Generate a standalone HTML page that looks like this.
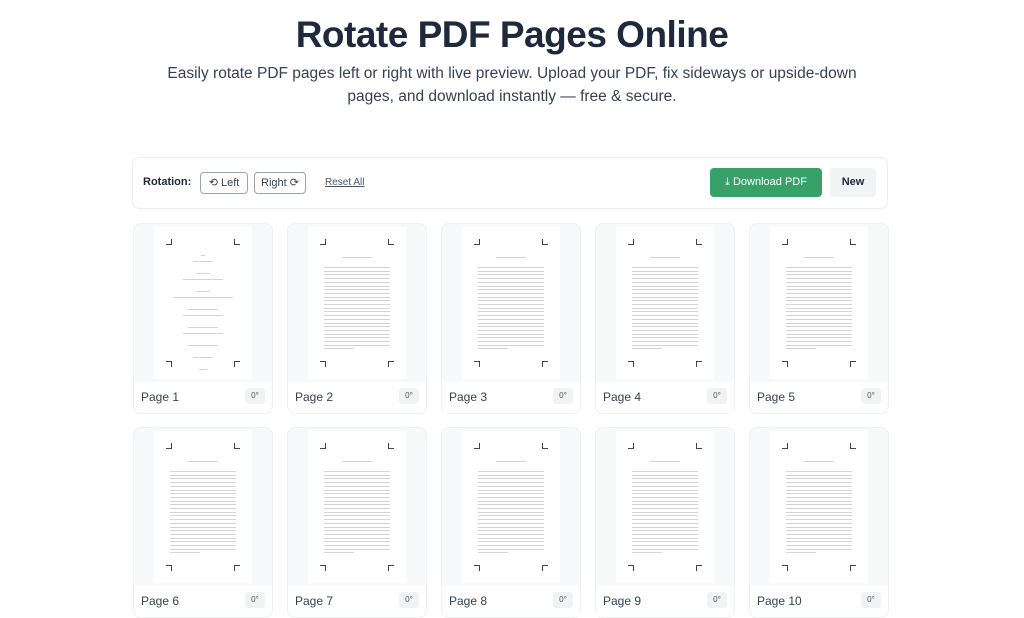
<!DOCTYPE html><html><head><style>
body{margin:0;width:1024px;height:504px;overflow:hidden;background:#fff;font-family:"Liberation Sans",sans-serif;color:#1f2937}
h1{margin:0;position:absolute;top:14px;width:1024px;text-align:center;font-size:37px;font-weight:700;color:#1e293b;letter-spacing:-0.5px}
.sub{position:absolute;top:62px;left:160px;width:704px;text-align:center;font-size:15.5px;line-height:23px;color:#374151}
.bar{position:absolute;left:132px;top:157px;width:754px;height:50px;border:1px solid #eceef1;border-radius:8px;box-shadow:0 1px 3px rgba(0,0,0,.04)}
.bar *{position:absolute;font-size:11px}
.btn{border:1px solid #9ca3af;border-radius:4px;height:20px;line-height:20px;text-align:center;color:#374151}
.card{position:absolute;width:138px;height:189px;border:1px solid #eef0f2;border-radius:8px;background:#f8f9fa;overflow:hidden}
.card .ft{position:absolute;left:0;right:0;bottom:0;height:31px;background:#fff}
.ft span{position:absolute;left:7px;top:8px;font-size:12px;color:#374151}
.ft b{position:absolute;right:7px;top:6px;width:20px;height:16px;background:#f1f2f4;border-radius:3px;font-size:8px;font-weight:400;text-align:center;line-height:16px;color:#555}
.pg{position:absolute;left:20px;top:3px;width:98px;height:152px;background:#fff}
.ln{position:absolute;height:1px;background:#d4d4d4}
.cr{position:absolute;width:5px;height:5px;border-color:#444;border-style:solid;border-width:0}
</style></head><body>
<h1>Rotate PDF Pages Online</h1>
<div class="sub">Easily rotate PDF pages left or right with live preview. Upload your PDF, fix sideways or upside-down pages, and download instantly — free &amp; secure.</div>
<div class="bar">
<span style="left:10px;top:18px;font-weight:700;font-size:11px;color:#1f2937">Rotation:</span>
<div class="btn" style="left:67px;top:14px;width:46px">⟲ Left</div>
<div class="btn" style="left:121px;top:14px;width:50px">Right ⟳</div>
<span style="left:192px;top:19px;text-decoration:underline;color:#4b5563;font-size:10px">Reset All</span>
<div style="left:577px;top:10px;width:112px;height:29px;background:#38a169;border-radius:4px;color:#fff;line-height:29px;text-align:center">⤓ Download PDF</div>
<div style="left:697px;top:10px;width:46px;height:29px;background:#f1f3f5;border-radius:4px;line-height:29px;text-align:center;font-weight:700;color:#1f2937">New</div>
</div>
<div id="g"></div>
<script>
let h='';
for(let r=0;r<2;r++)for(let c=0;c<5;c++){
let x=133+c*154,y=223+r*204;
let lines='';
if(c==0&&r==0){let ws=[4,20,0,14,40,0,14,60,0,30,40,0,30,40,0,30,0,20,0,8];ws.forEach((w,i)=>{if(w)lines+=`<div class="ln" style="left:${(98-w)/2}px;top:${28+i*6}px;width:${w}px"></div>`})}
else{lines+=`<div class="ln" style="left:34px;top:30px;width:30px"></div>`;
for(let i=0;i<23;i++){let w=i==22?30:66;lines+=`<div class="ln" style="left:16px;top:${40+i*3.7}px;width:${w}px"></div>`}}
h+=`<div class="card" style="left:${x}px;top:${y}px"><div class="pg">${lines}
<div class="cr" style="left:12px;top:12px;border-right-width:1px;border-bottom-width:1px"></div>
<div class="cr" style="right:12px;top:12px;border-left-width:1px;border-bottom-width:1px"></div>
<div class="cr" style="left:12px;bottom:12px;border-right-width:1px;border-top-width:1px"></div>
<div class="cr" style="right:12px;bottom:12px;border-left-width:1px;border-top-width:1px"></div>
</div><div class="ft"><span>Page ${r*5+c+1}</span><b>0°</b></div></div>`}
document.getElementById('g').innerHTML=h;
</script>
</body></html>
